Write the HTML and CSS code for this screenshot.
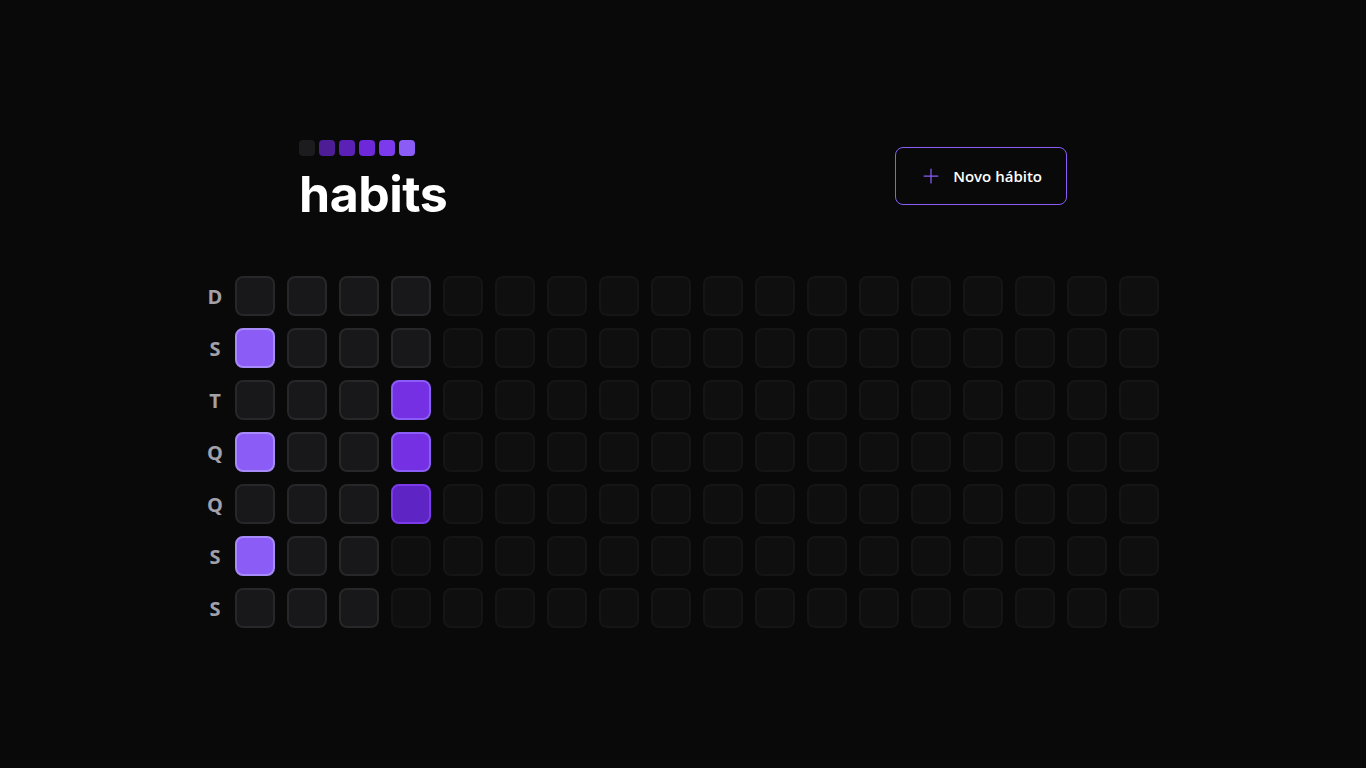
FILE: index.html
```html
<!DOCTYPE html>
<html lang="pt-BR">
<head>
<meta charset="utf-8">
<title>habits</title>
<link rel="stylesheet" href="styles.css">
</head>
<body>
<div class="screen">
  <div class="app">
    <header class="header">
      <div class="logo">
        <div class="logo-squares">
          <span class="sq sq0"></span><span class="sq sq1"></span><span class="sq sq2"></span><span class="sq sq3"></span><span class="sq sq4"></span><span class="sq sq5"></span>
        </div>
        <div class="logo-text">habits</div>
      </div>
      <button class="new-btn" type="button">
        <svg class="plus" width="20" height="20" viewBox="0 0 256 256"><path d="M40 128h176M128 40v176" stroke="#8b5cf6" stroke-width="16" stroke-linecap="round" fill="none"/></svg>
        <span>Novo hábito</span>
      </button>
    </header>

    <div class="table">
      <div class="weekdays">
        <div class="wd">D</div><div class="wd">S</div><div class="wd">T</div><div class="wd">Q</div><div class="wd">Q</div><div class="wd">S</div><div class="wd">S</div>
      </div>
      <div class="days">
        <div class="day"></div><div class="day p5"></div><div class="day"></div><div class="day p5"></div><div class="day"></div><div class="day p5"></div><div class="day"></div>
        <div class="day"></div><div class="day"></div><div class="day"></div><div class="day"></div><div class="day"></div><div class="day"></div><div class="day"></div>
        <div class="day"></div><div class="day"></div><div class="day"></div><div class="day"></div><div class="day"></div><div class="day"></div><div class="day"></div>
        <div class="day"></div><div class="day"></div><div class="day p4"></div><div class="day p4"></div><div class="day p3"></div><div class="day off"></div><div class="day off"></div>
        <div class="day off"></div><div class="day off"></div><div class="day off"></div><div class="day off"></div><div class="day off"></div><div class="day off"></div><div class="day off"></div>
        <div class="day off"></div><div class="day off"></div><div class="day off"></div><div class="day off"></div><div class="day off"></div><div class="day off"></div><div class="day off"></div>
        <div class="day off"></div><div class="day off"></div><div class="day off"></div><div class="day off"></div><div class="day off"></div><div class="day off"></div><div class="day off"></div>
        <div class="day off"></div><div class="day off"></div><div class="day off"></div><div class="day off"></div><div class="day off"></div><div class="day off"></div><div class="day off"></div>
        <div class="day off"></div><div class="day off"></div><div class="day off"></div><div class="day off"></div><div class="day off"></div><div class="day off"></div><div class="day off"></div>
        <div class="day off"></div><div class="day off"></div><div class="day off"></div><div class="day off"></div><div class="day off"></div><div class="day off"></div><div class="day off"></div>
        <div class="day off"></div><div class="day off"></div><div class="day off"></div><div class="day off"></div><div class="day off"></div><div class="day off"></div><div class="day off"></div>
        <div class="day off"></div><div class="day off"></div><div class="day off"></div><div class="day off"></div><div class="day off"></div><div class="day off"></div><div class="day off"></div>
        <div class="day off"></div><div class="day off"></div><div class="day off"></div><div class="day off"></div><div class="day off"></div><div class="day off"></div><div class="day off"></div>
        <div class="day off"></div><div class="day off"></div><div class="day off"></div><div class="day off"></div><div class="day off"></div><div class="day off"></div><div class="day off"></div>
        <div class="day off"></div><div class="day off"></div><div class="day off"></div><div class="day off"></div><div class="day off"></div><div class="day off"></div><div class="day off"></div>
        <div class="day off"></div><div class="day off"></div><div class="day off"></div><div class="day off"></div><div class="day off"></div><div class="day off"></div><div class="day off"></div>
        <div class="day off"></div><div class="day off"></div><div class="day off"></div><div class="day off"></div><div class="day off"></div><div class="day off"></div><div class="day off"></div>
        <div class="day off"></div><div class="day off"></div><div class="day off"></div><div class="day off"></div><div class="day off"></div><div class="day off"></div><div class="day off"></div>
      </div>
    </div>
  </div>
</div>
</body>
</html>
```

FILE: styles.css
```css
* { box-sizing: border-box; }
html, body {
  margin: 0;
  padding: 0;
  background: #09090a;
  color: #ffffff;
  font-family: "Open Sans", "Noto Sans", sans-serif;
}
.screen {
  width: 100vw;
  height: 100vh;
  display: flex;
  justify-content: center;
  align-items: center;
}
.app {
  width: 100%;
  max-width: 1024px;
  padding: 0 24px;
  display: flex;
  flex-direction: column;
  gap: 64px;
}
.header {
  width: 100%;
  max-width: 768px;
  margin: 0 auto;
  display: flex;
  align-items: center;
  justify-content: space-between;
}
.logo {
  display: flex;
  flex-direction: column;
  height: 72px;
}
.logo-squares {
  display: flex;
  gap: 4px;
  height: 16px;
}
.sq {
  width: 16px;
  height: 16px;
  border-radius: 4px;
  display: block;
}
.sq0 { background: #1c1c1f; }
.sq1 { background: #4c1d95; }
.sq2 { background: #5b21b6; }
.sq3 { background: #6d28d9; }
.sq4 { background: #7c3aed; }
.sq5 { background: #8b5cf6; }
.logo-text {
  margin-top: 20px;
  font-family: Inter, "Liberation Sans", sans-serif;
  font-weight: 700;
  font-size: 50px;
  line-height: 36px;
  letter-spacing: -0.5px;
  color: #ffffff;
}
.new-btn {
  display: flex;
  align-items: center;
  gap: 12px;
  padding: 16px 24px 16px 25px;
  border: 1px solid #8b5cf6;
  border-radius: 8px;
  background: transparent;
  color: #ffffff;
  font-family: "Open Sans", "Noto Sans", sans-serif;
  font-weight: 600;
  font-size: 15px;
  line-height: 24px;
}
.plus { display: block; }
.table {
  width: 100%;
  display: flex;
}
.weekdays {
  display: grid;
  grid-template-rows: repeat(7, 40px);
  gap: 12px;
}
.wd {
  width: 40px;
  height: 40px;
  display: flex;
  align-items: center;
  justify-content: center;
  color: #a1a1aa;
  font-weight: 700;
  font-size: 20px;
  padding-top: 1px;
}
.days {
  display: grid;
  grid-template-rows: repeat(7, 40px);
  grid-auto-flow: column;
  grid-auto-columns: 40px;
  gap: 12px;
}
.day {
  width: 40px;
  height: 40px;
  background: #18181b;
  border: 2px solid #27272a;
  border-radius: 8px;
}
.day.off { opacity: 0.4; }
.day.p5 { background: #8b5cf6; border-color: #a78bfa; }
.day.p4 { background: #7430e2; border-color: #8b5cf6; }
.day.p3 { background: #5f24c4; border-color: #7c3aed; }
```
